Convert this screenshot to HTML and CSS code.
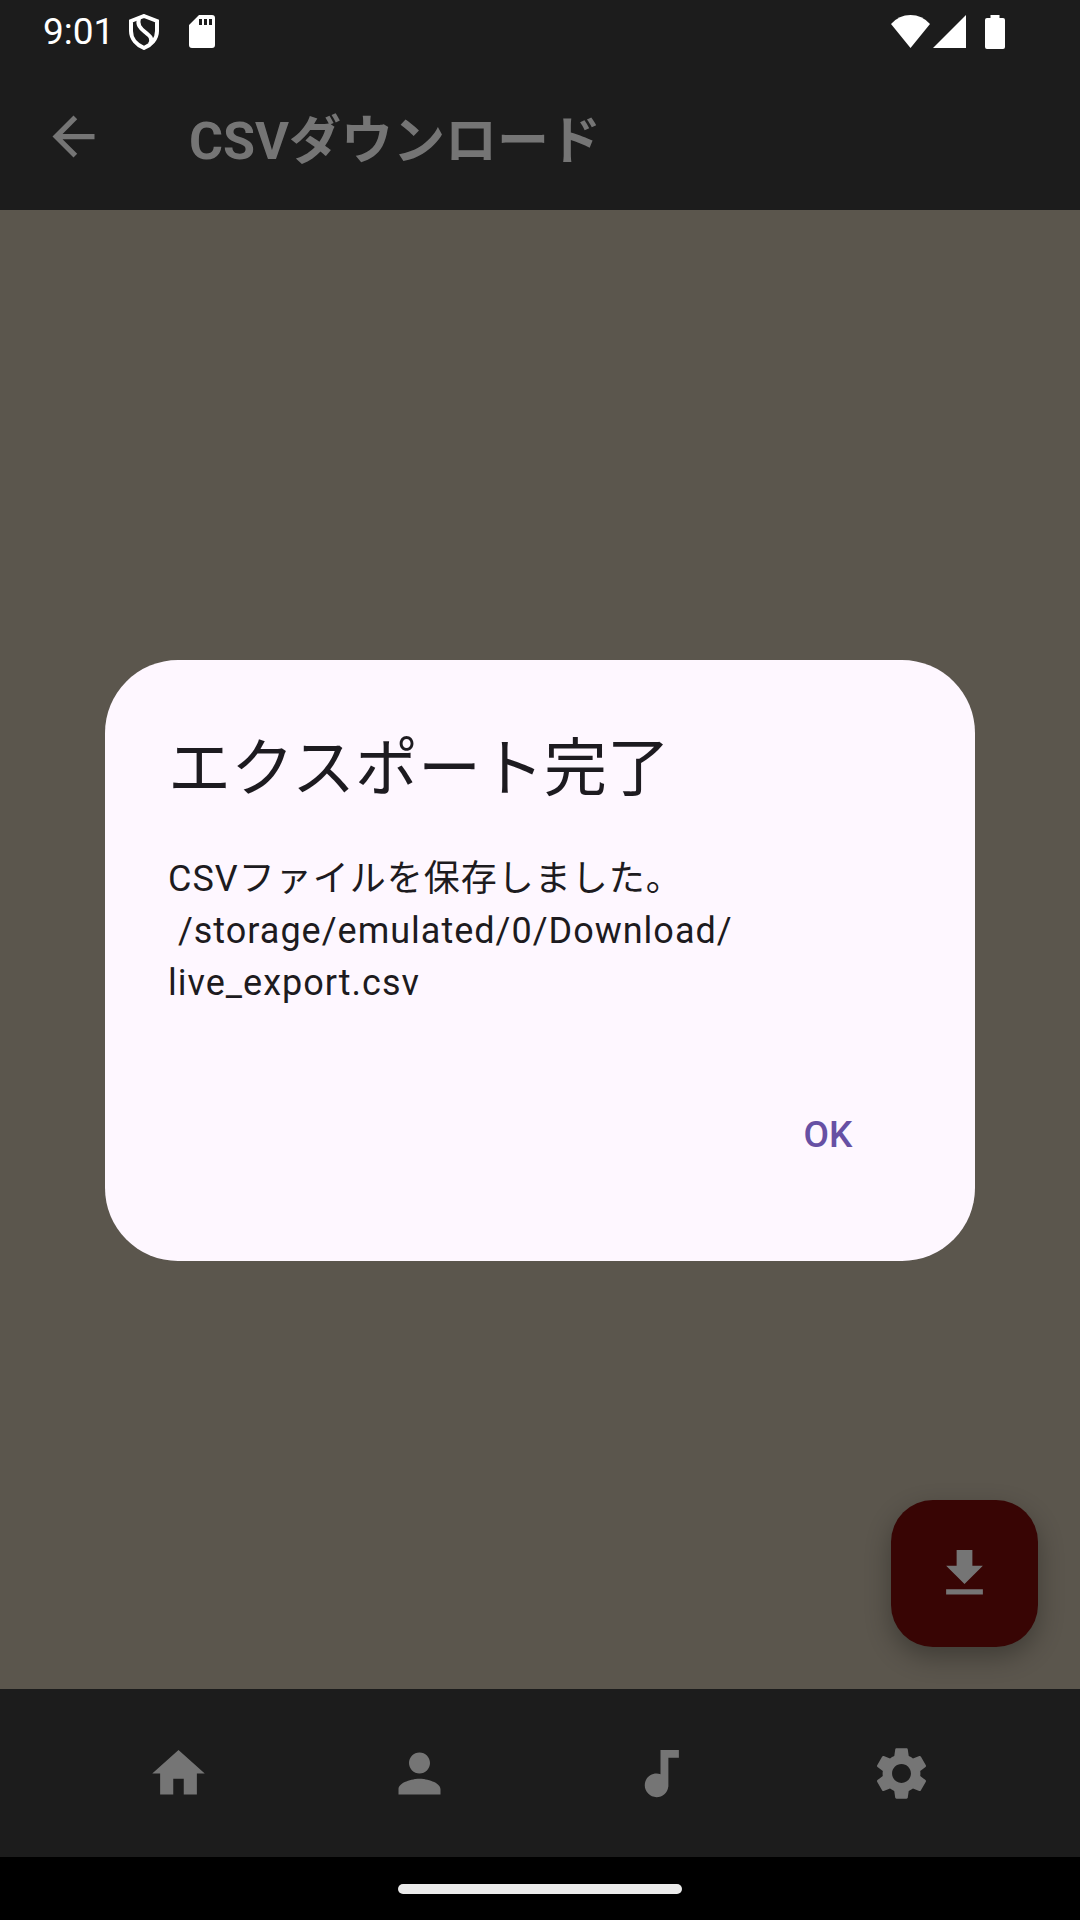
FILE: index.html
```html
<!DOCTYPE html>
<html lang="ja">
<head>
<meta charset="utf-8">
<meta name="viewport" content="width=device-width, initial-scale=1">
<title>CSVダウンロード</title>
<link rel="stylesheet" href="styles.css">
</head>
<body>
<div class="app">
  <div class="status-bar">
    <div class="status-left">
      <span class="clock">9:01</span>
      <svg class="shield" viewBox="0 0 30 36" aria-hidden="true"><path d="M15 2 28 7V17C28 25 22 31 15 34 8 31 2 25 2 17V7Z"/><path d="M10 4C8 11 11 14 16 18 21 22 24 24 21 30"/></svg>
      <svg class="sd-card" viewBox="0 0 26 33" aria-hidden="true"><path fill-rule="evenodd" d="M10 0H23Q26 0 26 3V30Q26 33 23 33H3Q0 33 0 30V10ZM10 4V10H13V4ZM15 4V10H18V4ZM20 4V10H23V4Z"/></svg>
    </div>
    <div class="status-right">
      <svg class="wifi" viewBox="0 0 39 33" aria-hidden="true"><path d="M0 9Q8 0 19.500 0T39 9L19.500 33Z"/></svg>
      <svg class="signal" viewBox="0 0 33 33" aria-hidden="true"><path d="M33 0V33H0Z"/></svg>
      <svg class="battery" viewBox="0 0 20 34" aria-hidden="true"><path d="M5.500 0H14.500V3H18Q20 3 20 5V32Q20 34 18 34H2Q0 34 0 32V5Q0 3 2 3H5.500Z"/></svg>
    </div>
  </div>
  <header class="toolbar">
    <button class="icon-button" type="button" aria-label="戻る">
      <svg class="icon" viewBox="0 0 24 24"><path d="M20 11H7.830l5.590-5.590L12 4l-8 8 8 8 1.410-1.410L7.830 13H20v-2z"/></svg>
    </button>
    <h1 class="toolbar-title">CSVダウンロード</h1>
  </header>
  <main class="content">
    <button class="fab" type="button" aria-label="ダウンロード">
      <svg class="icon" viewBox="0 0 24 24"><path d="M19 9h-4V3H9v6H5l7 7 7-7zM5 18v2h14v-2H5z"/></svg>
    </button>
  </main>
  <nav class="bottom-nav">
    <a class="nav-item" href="#home" aria-label="ホーム">
      <svg class="icon" viewBox="0 0 24 24"><path d="M10 20v-6h4v6h5v-8h3L12 3 2 12h3v8z"/></svg>
    </a>
    <a class="nav-item" href="#profile" aria-label="プロフィール">
      <svg class="icon" viewBox="0 0 24 24"><path d="M12 12c2.210 0 4-1.790 4-4s-1.790-4-4-4-4 1.790-4 4 1.790 4 4 4zm0 2c-2.670 0-8 1.340-8 4v2h16v-2c0-2.660-5.330-4-8-4z"/></svg>
    </a>
    <a class="nav-item" href="#music" aria-label="音楽">
      <svg class="icon" viewBox="0 0 24 24"><path d="M12 3v9.280c-.47-.17-.97-.28-1.500-.28C8.010 12 6 14.010 6 16.500S8.010 21 10.500 21c2.310 0 4.200-1.750 4.450-4H15V6h4V3h-7z"/></svg>
    </a>
    <a class="nav-item" href="#settings" aria-label="設定">
      <svg class="icon" viewBox="0 0 24 24"><path d="M19.140 12.940c.04-.3.060-.61.060-.94 0-.32-.02-.64-.07-.94l2.030-1.580c.18-.14.230-.41.120-.61l-1.920-3.320c-.12-.22-.37-.29-.59-.22l-2.390.96c-.5-.38-1.030-.7-1.620-.94l-.36-2.540c-.04-.24-.24-.41-.48-.41h-3.840c-.24 0-.43.170-.47.410l-.36 2.540c-.59.240-1.130.570-1.620.940l-2.390-.96c-.22-.08-.47 0-.59.220L2.740 8.870c-.12.210-.08.470.120.610l2.030 1.580c-.05.300-.09.630-.09.940s.02.640.070.940l-2.030 1.580c-.18.140-.23.410-.12.610l1.920 3.320c.12.220.370.290.590.220l2.390-.96c.5.380 1.030.700 1.620.940l.36 2.540c.05.240.240.410.480.410h3.840c.24 0 .44-.17.470-.41l.36-2.540c.59-.24 1.130-.56 1.620-.94l2.390.96c.22.080.470 0 .59-.22l1.920-3.320c.12-.22.070-.47-.12-.61l-2.010-1.580zM12 15.600c-1.980 0-3.600-1.620-3.600-3.600s1.620-3.600 3.600-3.600 3.600 1.620 3.600 3.600-1.620 3.600-3.600 3.600z"/></svg>
    </a>
  </nav>
  <div class="system-nav"><span class="home-handle"></span></div>
</div>

<div class="modal">
  <section class="dialog" role="alertdialog" aria-modal="true" aria-labelledby="dialog-title" aria-describedby="dialog-text">
    <h2 class="dialog-title" id="dialog-title">エクスポート完了</h2>
    <p class="dialog-text" id="dialog-text">CSVファイルを保存しました。
 /storage/emulated/0/Download/<wbr>live_export.csv</p>
    <div class="dialog-actions">
      <button class="text-button" type="button">OK</button>
    </div>
  </section>
</div>
</body>
</html>
```
FILE: styles.css
```css
* {
  box-sizing: border-box;
}

body {
  margin: 0;
  background: #000;
  font-family: Roboto, "Noto Sans CJK JP", sans-serif;
}

button {
  border: 0;
  padding: 0;
  background: none;
  color: inherit;
  font: inherit;
}

svg {
  display: block;
  fill: currentColor;
}

.app {
  display: flex;
  flex-direction: column;
  min-height: 100vh;
}

/* System status bar */
.status-bar {
  display: flex;
  justify-content: space-between;
  height: 63px;
  padding: 0 75px 0 43px;
  background: #1c1c1c;
  color: #fff;
}

.status-left,
.status-right {
  display: flex;
  align-items: center;
  height: 63px;
}

.clock {
  margin-right: 15px;
  font-size: 37px;
  line-height: 63px;
}

.shield {
  width: 30px;
  height: 36px;
  margin-right: 30px;
  fill: none;
  stroke: currentColor;
  stroke-width: 4;
}

.sd-card {
  width: 26px;
  height: 33px;
}

.wifi {
  width: 39px;
  height: 33px;
  margin-right: 3px;
}

.signal {
  width: 33px;
  height: 33px;
  margin-right: 19px;
}

.battery {
  width: 20px;
  height: 34px;
}

/* App bar */
.toolbar {
  display: flex;
  align-items: center;
  gap: 42px;
  height: 147px;
  background: #1c1c1c;
  color: #757575;
}

.icon-button {
  display: grid;
  place-items: center;
  width: 147px;
  height: 147px;
}

.icon {
  width: 63px;
  height: 63px;
}

.toolbar-title {
  margin: 0;
  font-size: 52px;
  line-height: normal;
  font-weight: 700;
}

.content {
  display: flex;
  flex: 1;
  justify-content: flex-end;
  align-items: flex-end;
  padding: 42px;
  background: #5b564d;
}

.fab {
  display: grid;
  place-items: center;
  width: 147px;
  height: 147px;
  border-radius: 42px;
  background: #380504;
  color: #757575;
  box-shadow: 0 10px 26px rgba(0, 0, 0, 0.3);
}

.bottom-nav {
  display: flex;
  height: 168px;
  padding: 0 58px;
  background: #1c1c1c;
  color: #757575;
}

.nav-item {
  display: grid;
  flex: 1;
  place-items: center;
  color: inherit;
}

.system-nav {
  display: flex;
  justify-content: center;
  align-items: center;
  height: 63px;
  background: #000;
}

.home-handle {
  width: 284px;
  height: 10px;
  border-radius: 5px;
  background: #ebebeb;
}

/* Dialog */
.modal {
  position: fixed;
  inset: 0;
  display: flex;
  align-items: center;
  padding: 105px;
}

.dialog {
  flex: 1;
  padding: 63px;
  border-radius: 73px;
  background: #fef7ff;
  color: #1d1b20;
}

.dialog-title {
  margin: 0 0 38px;
  font-size: 63px;
  line-height: 92px;
  font-weight: 400;
}

.dialog-text {
  margin: 0 0 63px;
  font-size: 36px;
  line-height: 52px;
  letter-spacing: 1px;
  white-space: pre-wrap;
}

.dialog-actions {
  display: flex;
  justify-content: flex-end;
}

.text-button {
  min-width: 168px;
  height: 126px;
  color: #6750a4;
  font-size: 37px;
  font-weight: 500;
}
```
